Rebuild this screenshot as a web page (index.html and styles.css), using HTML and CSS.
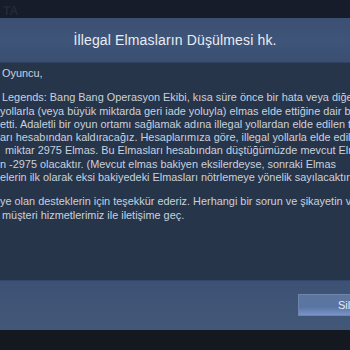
FILE: index.html
```html
<html>
<head>
    <meta charset="UTF-8" />
    <link rel="stylesheet" href="styles.css">
</head>
<body>
<div class="screen">
    <div class="topbar"><span class="ghost">TA</span></div>
    <div class="dialog">
        <div class="dialog-head">
            <h1>İllegal Elmasların Düşülmesi hk.</h1>
        </div>
        <div class="dialog-body">
            <p class="line ind2">Oyuncu,</p>
            <p class="line blank"></p>
            <p class="line ind2">Legends: Bang Bang Operasyon Ekibi, kısa süre önce bir hata veya diğer</p>
            <p class="line">yollarla (veya büyük miktarda geri iade yoluyla) elmas elde ettiğine dair bir</p>
            <p class="line">etti. Adaletli bir oyun ortamı sağlamak adına illegal yollardan elde edilen tüm</p>
            <p class="line">arı hesabından kaldıracağız. Hesaplarımıza göre, illegal yollarla elde edilen</p>
            <p class="line ind5">miktar 2975 Elmas. Bu Elmasları hesabından düştüğümüzde mevcut Elmas</p>
            <p class="line">n -2975 olacaktır. (Mevcut elmas bakiyen eksilerdeyse, sonraki Elmas</p>
            <p class="line">elerin ilk olarak eksi bakiyedeki Elmasları nötrlemeye yönelik sayılacaktır</p>
            <p class="line blank"></p>
            <p class="line">ye olan desteklerin için teşekkür ederiz. Herhangi bir sorun ve şikayetin var</p>
            <p class="line ind2">müşteri hizmetlerimiz ile iletişime geç.</p>
        </div>
        <div class="dialog-foot">
            <button class="btn-delete">Sil</button>
        </div>
    </div>
    <div class="bottombar"></div>
</div>
</body>
</html>
```

FILE: styles.css
```css
body {
    margin: 0;
    font-family: "Liberation Sans", Arial, sans-serif;
    background: #14181f;
}

.screen {
    width: 350px;
    height: 350px;
    overflow: hidden;
    display: flex;
    flex-direction: column;
}

.topbar {
    height: 18px;
    background: #161c29;
    padding-left: 3px;
}

.ghost {
    font-size: 12px;
    font-weight: bold;
    color: #232a37;
    line-height: 22px;
}

.dialog {
    display: flex;
    flex-direction: column;
}

.dialog-head {
    height: 44px;
    background: linear-gradient(#3b5073, #3e5478 50%, #3a4f72);
    border-bottom: 1px solid #2f4262;
    display: flex;
    align-items: center;
    justify-content: center;
}

.dialog-head h1 {
    margin: 0;
    font-size: 14px;
    font-weight: normal;
    color: #e9edf3;
    letter-spacing: 0.15px;
}

.dialog-body {
    height: 207px;
    background: #27354b;
    padding-top: 4px;
    padding-bottom: 6px;
    overflow: hidden;
    box-sizing: content-box;
}

.line {
    margin: 0;
    white-space: nowrap;
    font-size: 10.9px;
    line-height: 13.3px;
    color: #c9d1dd;
}

.line.blank {
    height: 11px;
}

.ind2 {
    padding-left: 2px;
}

.ind5 {
    padding-left: 5px;
}

.dialog-foot {
    height: 49px;
    background: linear-gradient(#3d5174, #435879);
    border-top: 1px solid #33476a;
    display: flex;
    align-items: center;
    justify-content: flex-end;
}

.btn-delete {
    width: 62px;
    height: 22px;
    margin-right: -10px;
    margin-top: -2px;
    border: 1px solid #6f85a8;
    background: linear-gradient(#5d76a0, #5a74a2 60%, #7894c8);
    color: #e8eef8;
    font-family: "Liberation Sans", Arial, sans-serif;
    font-size: 11px;
    text-align: left;
    padding: 0 0 0 39px;
}

.bottombar {
    flex: 1;
    background: #14181f;
}
```
